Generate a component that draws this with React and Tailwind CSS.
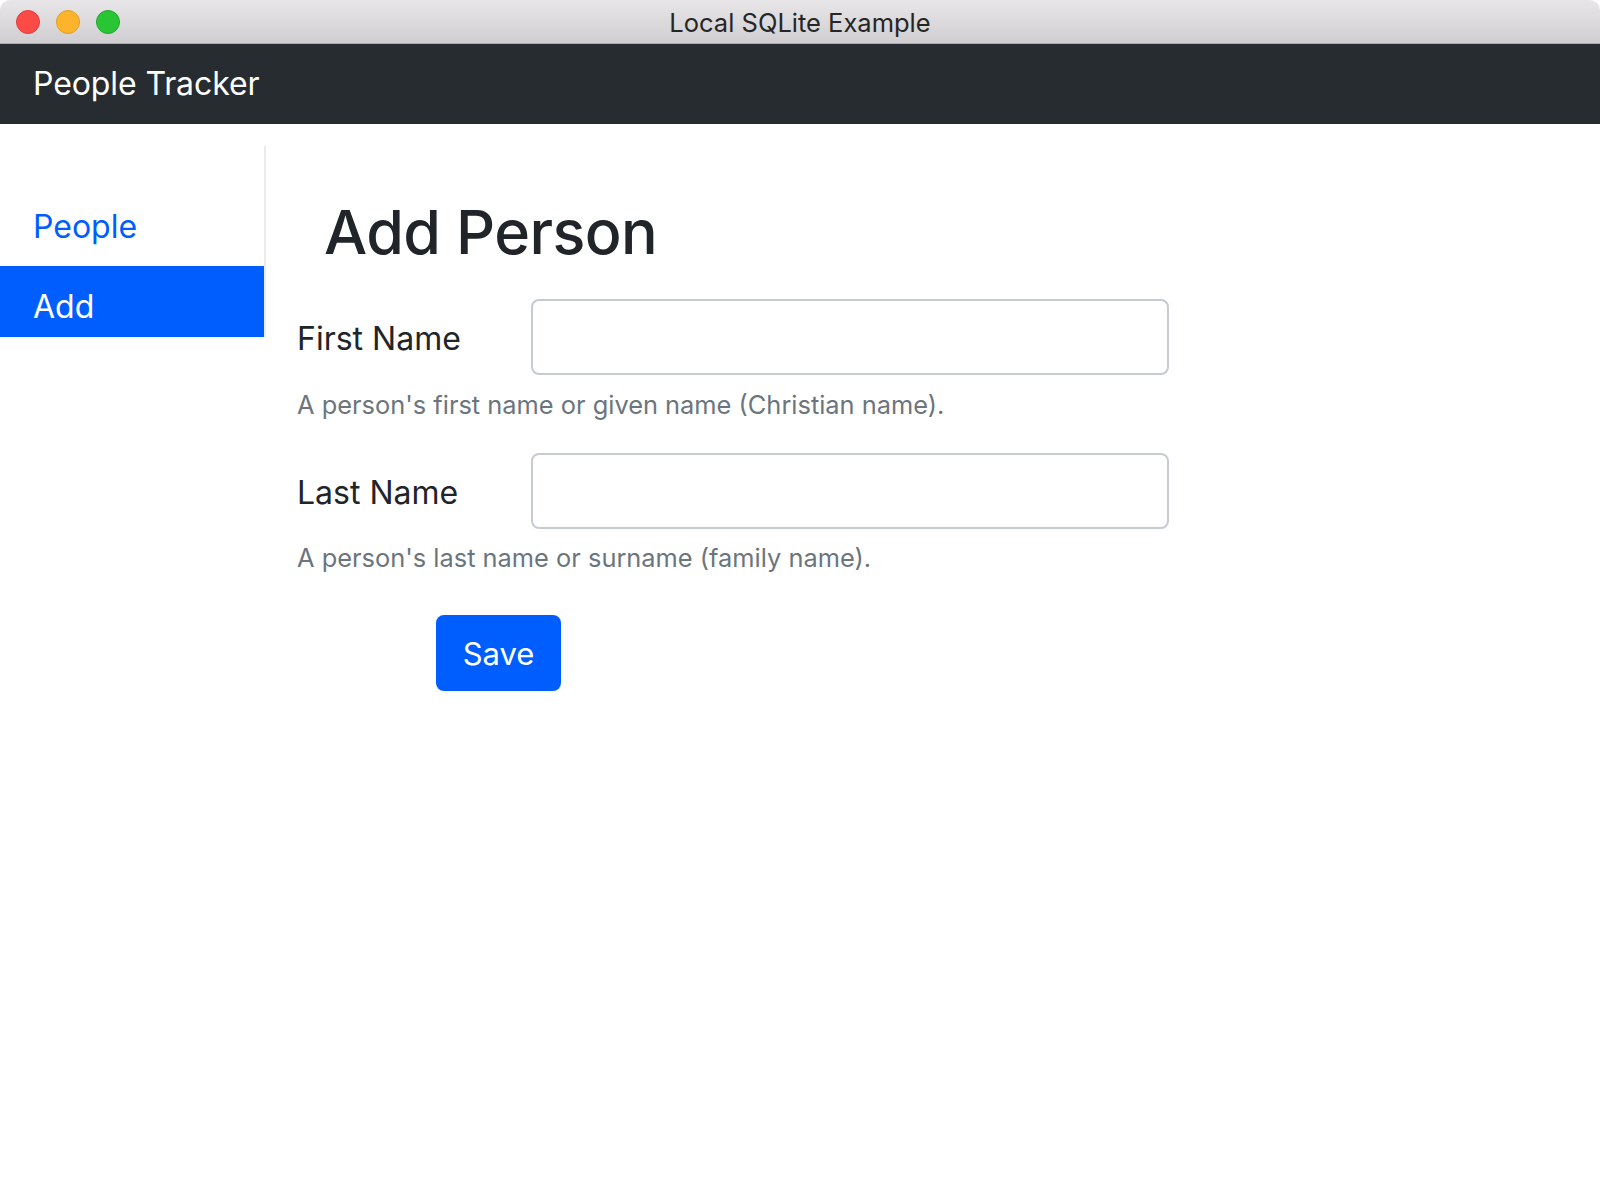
import React from "react";

export default function App() {
  const font = { fontFamily: "Inter, 'Noto Sans', sans-serif" };
  return (
    <div className="w-[1600px] h-[1200px] bg-white overflow-hidden" style={font}>
      {/* macOS title bar */}
      <div className="relative h-[44px] rounded-t-[10px] bg-gradient-to-b from-[#e8e6e8] to-[#d0ced0] border-b border-[#aeacae] flex items-center justify-center">
        <div className="absolute left-[16px] top-[10px] flex gap-[16px]">
          <span className="w-[24px] h-[24px] rounded-full bg-[#fc4b47] border border-[#df3e3a]" />
          <span className="w-[24px] h-[24px] rounded-full bg-[#fdb42b] border border-[#e19f23]" />
          <span className="w-[24px] h-[24px] rounded-full bg-[#29c535] border border-[#1fa82a]" />
        </div>
        <span className="pt-[2px] text-[25.5px] text-[#262626] leading-none">Local SQLite Example</span>
      </div>

      {/* navbar */}
      <div className="h-[80px] bg-[#272c31] flex items-center pl-[33px]">
        <span className="text-[32px] text-white leading-none tracking-[-0.1px]">People Tracker</span>
      </div>

      <div className="flex">
        {/* sidebar */}
        <div className="w-[266px] pt-[22px]">
          <div className="border-r-2 border-[#ebebeb] pt-[49px]">
            <div className="h-[71px] flex items-center pb-[8px] pl-[33px] text-[32px] text-[#005eff] leading-none">People</div>
            <div className="h-[71px] flex items-center pt-[10px] pl-[33px] text-[32px] text-white bg-[#005eff] leading-none">Add</div>
          </div>
        </div>

        {/* main */}
        <div className="flex-1 pl-[31px] pt-[70px]">
          <h1 className="pl-[27px] h-[76px] flex items-center text-[61px] font-medium text-[#212529] leading-none tracking-[-0.6px]">Add Person</h1>

          <div className="mt-[29px] flex items-center">
            <label className="w-[234px] pt-[4px] text-[32px] text-[#212529] leading-none">First Name</label>
            <input className="w-[638px] h-[76px] border-2 border-[#c6cad2] rounded-[8px] bg-white" />
          </div>
          <div className="h-[56px] pt-[3px] flex items-center text-[25.4px] text-[#6c757d] leading-none">A person's first name or given name (Christian name).</div>

          <div className="mt-[22px] flex items-center">
            <label className="w-[234px] pt-[4px] text-[32px] text-[#212529] leading-none">Last Name</label>
            <input className="w-[638px] h-[76px] border-2 border-[#c6cad2] rounded-[8px] bg-white" />
          </div>
          <div className="h-[56px] pt-[2px] flex items-center text-[25.4px] text-[#6c757d] leading-none">A person's last name or surname (family name).</div>

          <div className="mt-[30px] pl-[139px]">
            <button className="w-[125px] h-[76px] rounded-[8px] bg-[#005eff] text-white text-[31px] leading-none flex items-center justify-center">Save</button>
          </div>
        </div>
      </div>
    </div>
  );
}
